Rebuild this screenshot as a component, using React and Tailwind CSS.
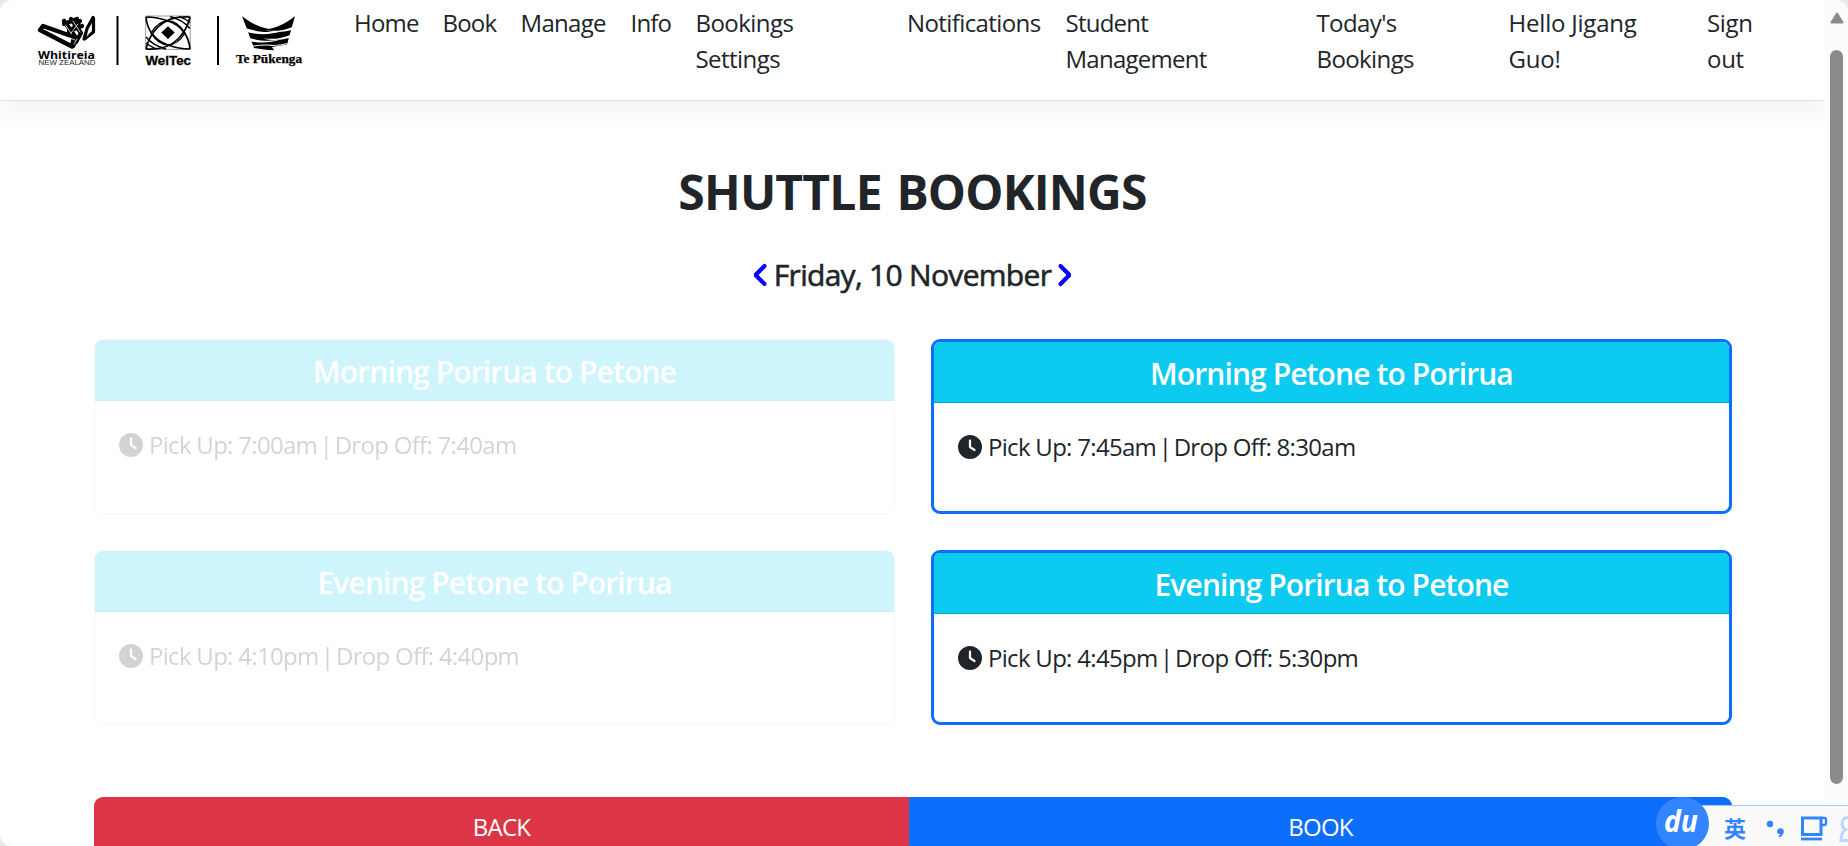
import { FaChevronLeft, FaChevronRight, FaClock } from "react-icons/fa6";

function Logos() {
  return (
    <svg className="block h-[56px] w-[272px]" viewBox="34 14 272 56" fill="none" stroke="#000">
      <g strokeLinecap="round" strokeLinejoin="round">
        <path d="M43 26l31 11-2 9.500-32-16.500z" strokeWidth="4.400" />
        <path d="M64 21l12 17-3 8" strokeWidth="4.500" />
        <path d="M71 19l10 14-5 9M80 21l-12 13M64 24l13-5M69 31l13-5" strokeWidth="4.200" />
        <path d="M93 17.500l-6 11M93.500 18v14l-9 7M84 39l3-10" strokeWidth="3.200" />
        <g stroke="#fff" strokeWidth="0.800">
          <path d="M65.500 25l6 9M73 21l7 11M71 33l7-9M70 38l5 2M74 44l3-5" />
          <path d="M87 36l3-4" />
        </g>
      </g>
      <g fill="#000" stroke="none">
        <text x="38" y="59" textLength="57" lengthAdjust="spacingAndGlyphs" fontFamily="Open Sans, sans-serif" fontWeight="700" fontSize="10.500">Whitireia</text>
        <text x="38.500" y="65" textLength="57" lengthAdjust="spacingAndGlyphs" fontFamily="Liberation Sans, sans-serif" fontSize="6.800" fill="#222">NEW ZEALAND</text>
        <rect x="116.500" y="16" width="2" height="49" />
        <rect x="217" y="16" width="2" height="49" />
        <path d="M168 26.200l6.700 6.400-6.700 6.400-6.700-6.400z" />
        <text x="145.500" y="65" textLength="45.500" lengthAdjust="spacingAndGlyphs" fontFamily="Liberation Sans, sans-serif" fontWeight="700" fontSize="13.300" stroke="#000" strokeWidth="0.300">WelTec</text>
        <text x="236" y="63.300" textLength="66" lengthAdjust="spacingAndGlyphs" fontFamily="Liberation Serif, serif" fontWeight="700" fontSize="11.500" stroke="#000" strokeWidth="0.250">Te Pūkenga</text>
        <path d="M242 16c7 6 16 11 27 13 10-2 19-7 26-13l-8 28.500-15 2.500 2 3.300c-7-.3-13-1.300-20-2.300z" />
      </g>
      <g fill="#fff" stroke="none">
        <path d="M245 28c12 4 24 5 37 3-12 4-23 4-36 1z" />
        <path d="M292.500 27c-9 3.500-16 4.500-27 3.500 10 2.500 18 1.500 26.500-.5z" />
        <path d="M248 37.500c11 3.500 21 4 33 2-11 3.500-21 4-32 1.500z" />
        <path d="M290 35c-9 3.500-16 4.500-27 3.500 10 2.500 18 1.500 26-.5z" />
        <path d="M253 45.500c8-1 15-1.500 21-.5 4 0 9-.7 13-2l-.5 1.200c-6 1.300-11 1.800-15 1.700-6-.9-12-.4-18 .8z" />
      </g>
      <g strokeWidth="1.700">
        <rect x="145.700" y="16" width="44.500" height="33.300" strokeWidth="0.800" stroke="#888" />
        <path d="M146 17c1 13 9 24 22 28 8 3 15 4 22 4M190 49c-1-13-9-24-22-28-8-3-15-4-22-4" />
        <path d="M190 17c-13-1-24 2-32 10-6 6-10 13-12 22M146 49c13 1 24-2 32-10 6-6 10-13 12-22" />
        <path d="M151 33c5-8 10-12 17-12s12 4 17 12c-5 8-10 12-17 12s-12-4-17-12z" strokeWidth="1.400" />
        <path d="M146 37c5 6 12 10 20 12M146 43c4 3 7 5 11 6M170 16.500c8 2 15 6 20 12M179 16.500c5 1.500 8 3.500 11 6" strokeWidth="1.400" />
      </g>
    </svg>
  );
}

const nav = [
  { lines: ["Home"], box: "w-[88.500px] tracking-[-0.800px]" },
  { lines: ["Book"], box: "w-[78px] tracking-[-0.800px]" },
  { lines: ["Manage"], box: "w-[110px] tracking-[-0.700px]" },
  { lines: ["Info"], box: "w-[65px] tracking-[-0.800px]" },
  { lines: ["Bookings", "Settings"], box: "w-[211.500px] tracking-[-0.550px]" },
  { lines: ["Notifications"], box: "w-[158.500px] tracking-[-0.600px]" },
  { lines: ["Student", "Management"], box: "w-[251px] tracking-[-0.750px]" },
  { lines: ["Today's", "Bookings"], box: "w-[192px] tracking-[-0.600px]" },
  { lines: ["Hello Jigang", "Guo!"], box: "w-[198.500px] tracking-[-0.200px]" },
  { lines: ["Sign", "out"], box: "w-[60px] tracking-[-0.300px]" },
];

function Card({ title, pickUp, dropOff, disabled }) {
  return (
    <article
      className={
        disabled
          ? "h-[175px] overflow-hidden rounded-[9px] border border-black/[0.176] bg-white opacity-20"
          : "h-[175px] overflow-hidden rounded-[9px] border-[3px] border-[#0d6efd] bg-white"
      }
    >
      <h3 className="flex h-[61px] items-center justify-center border-b border-black/[0.176] bg-[#0dcaf0] pt-[3px] text-[30px] leading-9 font-semibold tracking-[-0.900px] text-white">
        {title}
      </h3>
      <div className="flex items-center px-6 pt-[25px] text-2xl leading-9 tracking-[-0.700px]">
        <FaClock className="mr-1.5 size-6" />
        <p className="pt-px">
          Pick Up: {pickUp} <span className="-mx-[3px]">|</span> Drop Off: {dropOff}
        </p>
      </div>
    </article>
  );
}

function InputToolbar() {
  return (
    <div className="absolute right-0 bottom-0 h-[50px] w-[193px] overflow-hidden">
      <div className="mt-[9px] ml-[27px] flex h-[41px] items-start border-t border-[#a3c8ff] bg-[#fafafa]">
        <span className="mt-[9px] ml-[42px] w-[41px] font-['Noto_Sans_CJK_SC',sans-serif] text-[22px] leading-6 font-bold text-[#3385ff]">英</span>
        <svg className="mt-[9px] h-[31px] w-[83px]" viewBox="1765 815 83 31" fill="none" stroke="#3385ff">
          <circle cx="1770" cy="824" r="3.200" fill="#3385ff" stroke="none" />
          <path d="M1777 831.500a3.400 3.400 0 1 1 6.600 1.200c-.7 2.500-2.300 4-4.600 4.600l-.6-1.300c1.200-.5 1.900-1 2.200-1.900-2 .2-3.600-.8-3.600-2.600z" fill="#3385ff" stroke="none" />
          <path d="M1802.500 818h18.500v16.500h-18.500z" strokeWidth="3" />
          <path d="M1821 818h3.500q1.500 0 1.500 1.500v3.500q0 2-2 2h-3" strokeWidth="2.300" />
          <path d="M1801 839h21" strokeWidth="2.800" />
          <path d="M1850 817.500c-5-1-8 2-8 6 0 3 1.500 5 3.500 6-3.500 2-4.500 5.500-4.500 11h10" stroke="#bcd7ff" strokeWidth="3" />
        </svg>
      </div>
      <svg className="absolute top-0 left-0 h-[50px] w-[54px]" viewBox="0 0 54 50">
        <circle cx="27.500" cy="27.500" r="26.500" fill="#3385ff" />
        <text x="9" y="36" textLength="34" lengthAdjust="spacingAndGlyphs" fontFamily="Open Sans, sans-serif" fontSize="30" fontWeight="700" fontStyle="italic" fill="#fff">du</text>
      </svg>
    </div>
  );
}

export default function App() {
  return (
    <div className="relative h-[846px] w-[1848px] overflow-hidden bg-[#e9e9e9] font-['Open_Sans',sans-serif] text-[#212529]">
      <div className="flex h-full overflow-hidden rounded-[12px] bg-white">
        <div className="w-[1825px] overflow-hidden">
          <header className="flex h-[101px] border-b border-[#dee2e6] pt-[5px] pl-[34px] shadow-[0_12px_24px_rgba(0,0,0,0.05)]">
            <div className="w-[320px] pt-[9px]">
              <Logos />
            </div>
            <nav className="flex text-2xl leading-9">
              {nav.map(({ lines, box }) => (
                <a key={lines.join(" ")} className={box}>
                  {lines.map((line) => (
                    <span key={line} className="block whitespace-nowrap">{line}</span>
                  ))}
                </a>
              ))}
            </nav>
          </header>
          <main className="px-[94px] pt-[62px]">
            <h1 className="text-center text-[48px] leading-[58px] font-bold tracking-[-0.800px] [word-spacing:3px]">SHUTTLE BOOKINGS</h1>
            <div className="mt-[35px] flex h-[38px] items-center justify-center gap-[5px]">
              <FaChevronLeft className="h-6 w-[15px] stroke-[#00f] stroke-[24px] text-[#00f]" />
              <h2 className="text-[30px] leading-9 tracking-[-0.700px] [-webkit-text-stroke:0.6px_#212529]">Friday, 10 November</h2>
              <FaChevronRight className="h-6 w-[15px] stroke-[#00f] stroke-[24px] text-[#00f]" />
            </div>
            <section className="mt-[45px] grid grid-cols-[801px_801px] gap-x-9 gap-y-9">
              <Card title="Morning Porirua to Petone" pickUp="7:00am" dropOff="7:40am" disabled />
              <Card title="Morning Petone to Porirua" pickUp="7:45am" dropOff="8:30am" />
              <Card title="Evening Petone to Porirua" pickUp="4:10pm" dropOff="4:40pm" disabled />
              <Card title="Evening Porirua to Petone" pickUp="4:45pm" dropOff="5:30pm" />
            </section>
            <div className="mt-[72px] flex h-[60px] w-[1638px] overflow-hidden rounded-[9px] text-2xl leading-9 text-white">
              <button className="w-[815px] bg-[#dc3545] tracking-[-0.700px]">BACK</button>
              <button className="flex-1 bg-[#0d6efd] tracking-[-0.700px]">BOOK</button>
            </div>
          </main>
        </div>
        <aside className="flex w-[23px] flex-col items-center bg-[#fcfcfc] pt-[12px]">
          <svg className="h-[12px] w-[14px]" viewBox="0 0 14 12">
            <path d="M7 1.500L12.500 10.500H1.500z" fill="#8b8b8b" stroke="#8b8b8b" strokeWidth="2" strokeLinejoin="round" />
          </svg>
          <div className="mt-[26px] h-[734px] w-[13px] rounded-full bg-[#8b8b8b]" />
        </aside>
      </div>
      <InputToolbar />
    </div>
  );
}
